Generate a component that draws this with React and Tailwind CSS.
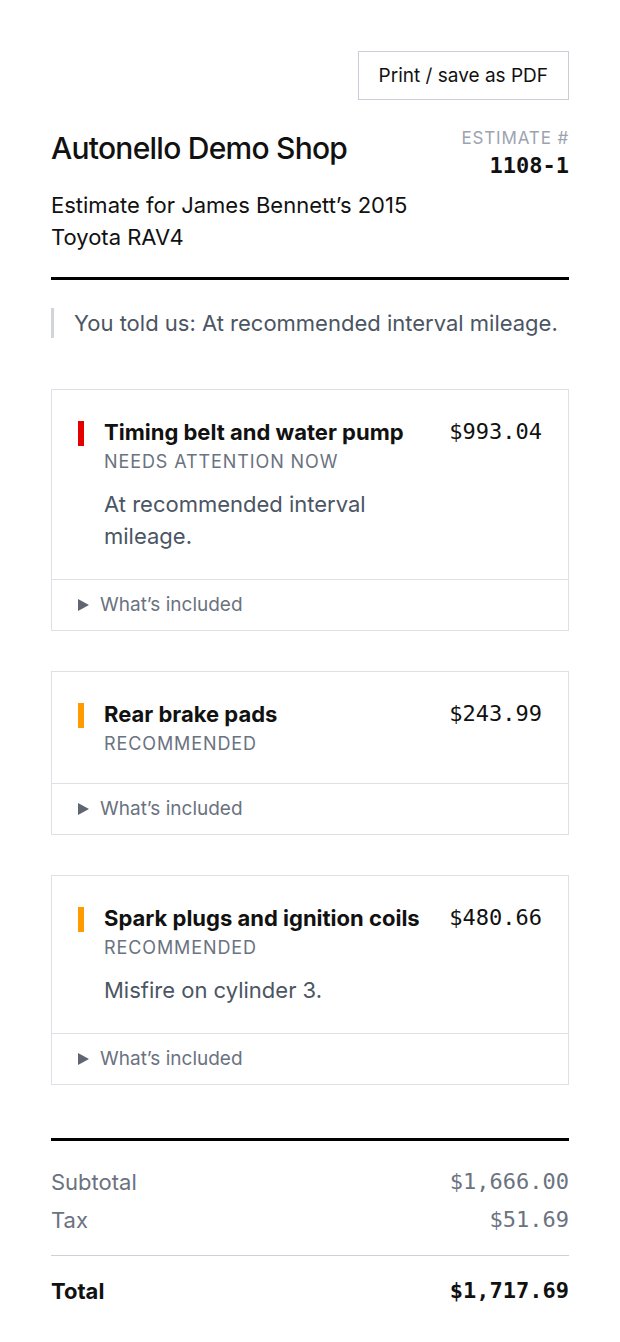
import { useState } from "react";

const items = [
  {
    title: "Timing belt and water pump",
    price: "$993.04",
    status: "Needs attention now",
    bar: "bg-[#e50000]",
    note: "At recommended interval mileage.",
  },
  {
    title: "Rear brake pads",
    price: "$243.99",
    status: "Recommended",
    bar: "bg-[#ff9a00]",
    note: "",
  },
  {
    title: "Spark plugs and ignition coils",
    price: "$480.66",
    status: "Recommended",
    bar: "bg-[#ff9a00]",
    note: "Misfire on cylinder 3.",
  },
];

const mono = "font-['DejaVu_Sans_Mono',monospace]";

function ItemCard({ item }) {
  const [open, setOpen] = useState(false);

  return (
    <div className="border border-[#dde1e6] bg-white">
      <div className="flex gap-5 px-[26px] pt-[27px] pb-[27px]">
        <div className={`mt-[4px] h-[25px] w-[6px] shrink-0 ${item.bar}`} />
        <div className="min-w-0 flex-1">
          <div className="text-[22px] font-bold leading-[30px] text-[#111]">
            {item.title}
          </div>
          <div className="mt-[3px] text-[18px] uppercase leading-6 tracking-wider text-[#6b7280]">
            {item.status}
          </div>
          {item.note && (
            <p className="mt-[14px] text-[22px] leading-8 text-[#4b5563]">{item.note}</p>
          )}
        </div>
        <div className={`shrink-0 text-[22px] leading-[30px] text-[#111] ${mono}`}>
          {item.price}
        </div>
      </div>
      <button
        onClick={() => setOpen(!open)}
        className="flex w-full items-center gap-[11px] border-t border-[#dde1e6] px-[26px] py-[13px] text-left text-[19px] leading-6 text-[#6b7280]"
      >
        <svg width="11" height="12" viewBox="0 0 11 12" className={open ? "rotate-90" : ""}>
          <path d="M0 0 L11 6 L0 12 Z" fill="#5f6672" />
        </svg>
        What’s included
      </button>
    </div>
  );
}

export default function App() {
  return (
    <div className="min-h-screen bg-white font-['Inter',sans-serif] text-[#111]">
      <div className="px-[51px] pt-[51px] pb-[35px]">
        <div className="flex justify-end">
          <button className="border border-[#c9ced6] px-5 py-3 text-[19px] leading-[23px] text-[#111]">
            Print / save as PDF
          </button>
        </div>

        <div className="mt-[30px] flex gap-6 border-b-[3px] border-black pb-6">
          <div className="flex-1">
            <h1 className="text-[30px] font-medium leading-9 tracking-tight">
              Autonello Demo Shop
            </h1>
            <p className="mt-[23px] text-[22px] leading-8">
              Estimate for James Bennett’s 2015 Toyota RAV4
            </p>
          </div>
          <div className="shrink-0 text-right">
            <div className="-mt-[3px] text-[17px] uppercase leading-[22px] tracking-wider text-[#9ca3af]">
              Estimate #
            </div>
            <div className={`mt-[2px] text-[22px] font-bold leading-[30px] ${mono}`}>1108-1</div>
          </div>
        </div>

        <blockquote className="mt-7 border-l-[3px] border-[#d1d5db] pl-5 text-[22px] leading-[30px] text-[#4b5563]">
          You told us: At recommended interval mileage.
        </blockquote>

        <div className="mt-[51px] flex flex-col gap-10">
          {items.map((item) => (
            <ItemCard key={item.title} item={item} />
          ))}
        </div>

        <div className="mt-[53px] border-t-[3px] border-black pt-[25px]">
          <div className="flex flex-col gap-[6px] text-[22px] leading-8 text-[#6b7280]">
            <div className="flex justify-between">
              <span>Subtotal</span>
              <span className={`text-[22px] ${mono}`}>$1,666.00</span>
            </div>
            <div className="flex justify-between">
              <span>Tax</span>
              <span className={`text-[22px] ${mono}`}>$51.69</span>
            </div>
          </div>
          <div className="mt-[19px] flex justify-between border-t border-[#cbd2d9] pt-[19px] text-[22px] leading-8">
            <span className="font-bold">Total</span>
            <span className={`text-[22px] font-bold ${mono}`}>$1,717.69</span>
          </div>
        </div>
      </div>
    </div>
  );
}
